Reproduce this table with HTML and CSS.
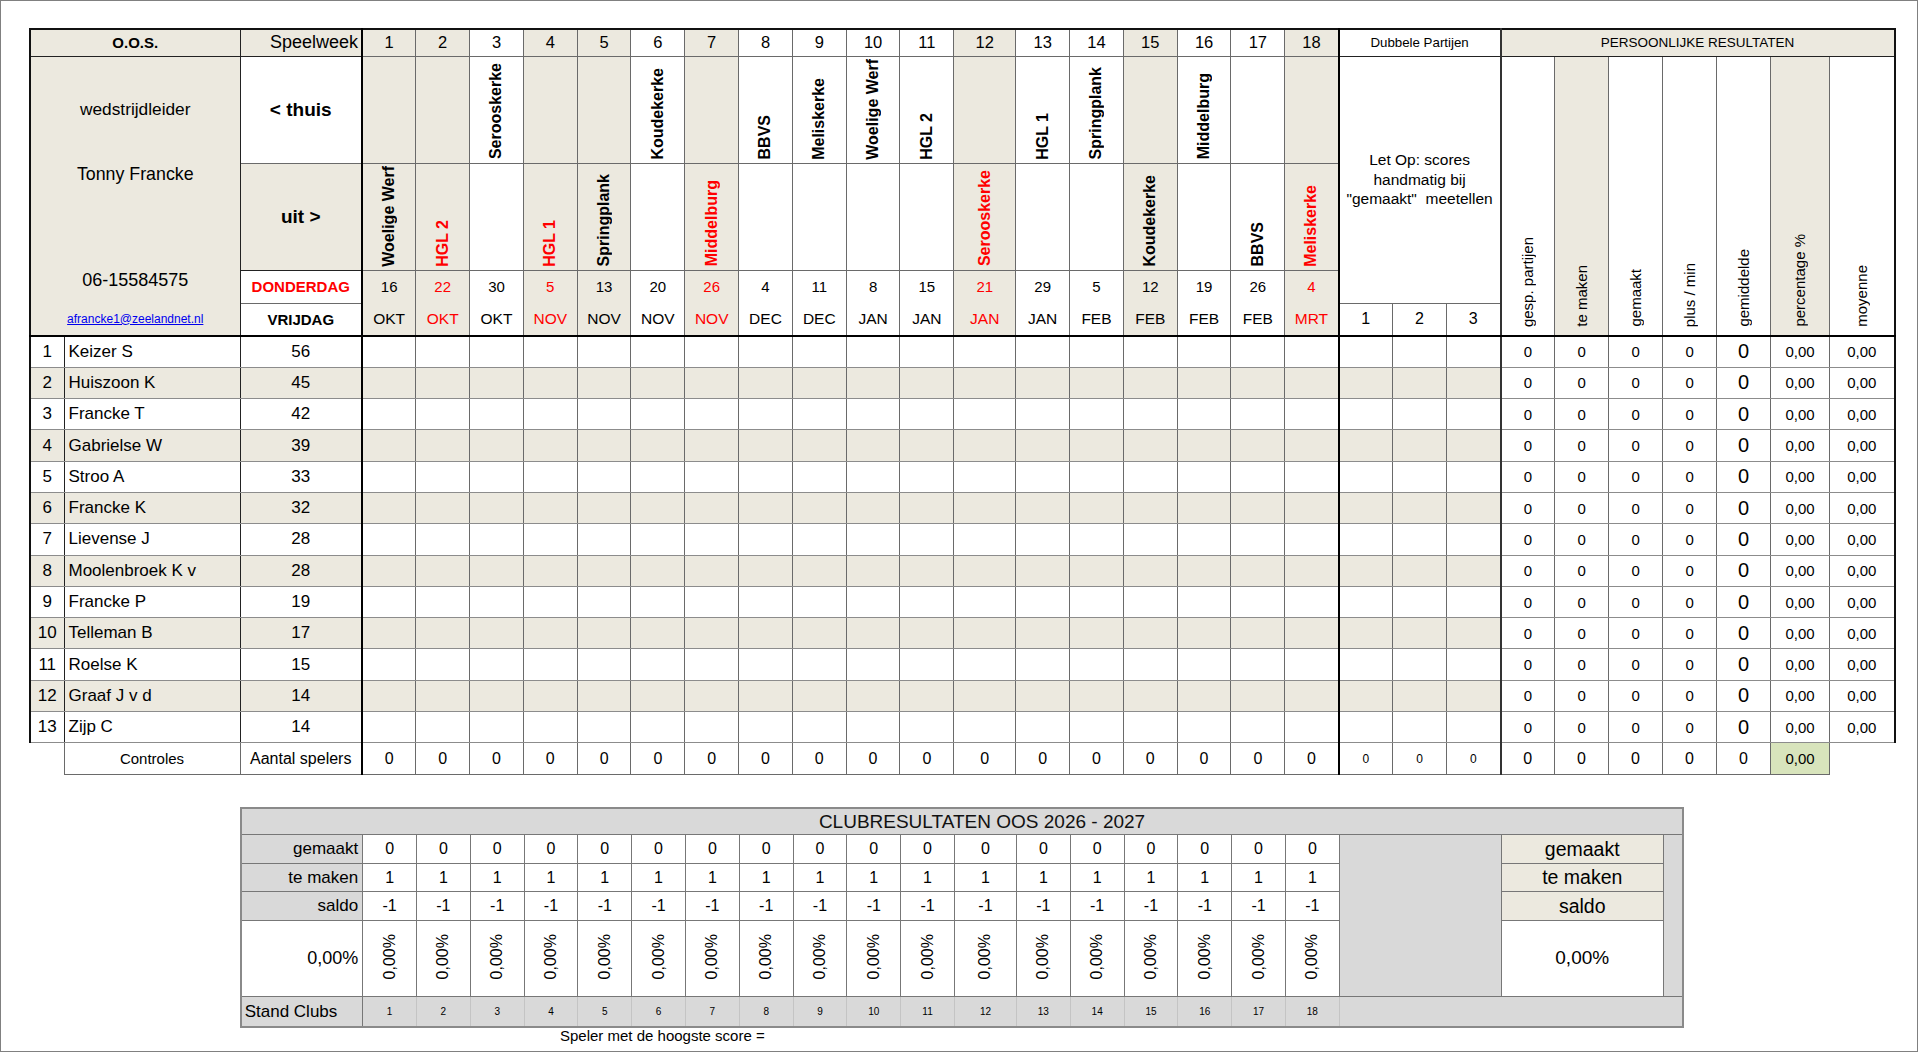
FILE: index.html
```html
<!DOCTYPE html>
<html lang="nl">
<head>
<meta charset="utf-8">
<title>O.O.S. Speelschema</title>
<link rel="stylesheet" href="styles.css">
</head>
<body>
<div class="page">
<table class="main">
<colgroup>
<col class="c-num"><col class="c-name"><col class="c-sw">
<col class="c-wk"><col class="c-wk"><col class="c-wk"><col class="c-wk"><col class="c-wk"><col class="c-wk"><col class="c-wk"><col class="c-wk"><col class="c-wk"><col class="c-wk"><col class="c-wk">
<col class="c-wk12">
<col class="c-wk"><col class="c-wk"><col class="c-wk"><col class="c-wk"><col class="c-wk"><col class="c-wk">
<col class="c-db"><col class="c-db"><col class="c-db">
<col class="c-pr"><col class="c-pr"><col class="c-pr"><col class="c-pr"><col class="c-pr"><col class="c-pct"><col class="c-moy">
</colgroup>
<tr class="r1">
<td colspan="2" class="b oos">O.O.S.</td>
<td class="b sw swh">Speelweek</td>
<td class="b wk">1</td><td class="b wk">2</td><td class="wk">3</td><td class="b wk">4</td><td class="b wk">5</td><td class="wk">6</td><td class="b wk">7</td><td class="wk">8</td><td class="wk">9</td><td class="wk">10</td><td class="wk">11</td><td class="b wk">12</td><td class="wk">13</td><td class="wk">14</td><td class="b wk">15</td><td class="wk">16</td><td class="wk">17</td><td class="b wk">18</td>
<td colspan="3" class="dl dbh">Dubbele Partijen</td>
<td colspan="7" class="b pl prh">PERSOONLIJKE RESULTATEN</td>
</tr>
<tr class="r2">
<td colspan="2" rowspan="4" class="b info"><div class="info-in"><div class="wl">wedstrijdleider</div><div class="tf">Tonny Francke</div><div class="ph">06-15584575</div><a class="mail" href="#">afrancke1@zeelandnet.nl</a></div></td>
<td class="sw thuis">&lt; thuis</td>
<td class="b tv"></td><td class="b tv"></td><td class="tv"><span class="v">Serooskerke</span></td><td class="b tv"></td><td class="b tv"></td><td class="tv"><span class="v">Koudekerke</span></td><td class="b tv"></td><td class="tv"><span class="v">BBVS</span></td><td class="tv"><span class="v">Meliskerke</span></td><td class="tv"><span class="v">Woelige Werf</span></td><td class="tv"><span class="v">HGL 2</span></td><td class="b tv"></td><td class="tv"><span class="v">HGL 1</span></td><td class="tv"><span class="v">Springplank</span></td><td class="b tv"></td><td class="tv"><span class="v">Middelburg</span></td><td class="tv"></td><td class="b tv"></td>
<td colspan="3" rowspan="3" class="dl letop">Let Op: scores<br>handmatig bij<br>"gemaakt"&nbsp; meetellen</td>
<td rowspan="4" class="pl pv"><span class="vr">gesp. partijen</span></td>
<td rowspan="4" class="b pv"><span class="vr">te maken</span></td>
<td rowspan="4" class="pv"><span class="vr">gemaakt</span></td>
<td rowspan="4" class="pv"><span class="vr">plus / min</span></td>
<td rowspan="4" class="pv"><span class="vr">gemiddelde</span></td>
<td rowspan="4" class="b pv"><span class="vr">percentage %</span></td>
<td rowspan="4" class="pv"><span class="vr">moyenne</span></td>
</tr>
<tr class="r3">
<td class="b sw uit">uit &gt;</td>
<td class="b tv"><span class="v">Woelige Werf</span></td><td class="b tv"><span class="v red">HGL 2</span></td><td class="tv"></td><td class="b tv"><span class="v red">HGL 1</span></td><td class="b tv"><span class="v">Springplank</span></td><td class="tv"></td><td class="b tv"><span class="v red">Middelburg</span></td><td class="tv"></td><td class="tv"></td><td class="tv"></td><td class="tv"></td><td class="b tv"><span class="v red">Serooskerke</span></td><td class="tv"></td><td class="tv"></td><td class="b tv"><span class="v">Koudekerke</span></td><td class="tv"></td><td class="tv"><span class="v">BBVS</span></td><td class="b tv"><span class="v red">Meliskerke</span></td>
</tr>
<tr class="r4">
<td class="sw dag red">DONDERDAG</td>
<td class="b dt">16</td><td class="b dt red">22</td><td class="dt">30</td><td class="b dt red">5</td><td class="b dt">13</td><td class="dt">20</td><td class="b dt red">26</td><td class="dt">4</td><td class="dt">11</td><td class="dt">8</td><td class="dt">15</td><td class="b dt red">21</td><td class="dt">29</td><td class="dt">5</td><td class="b dt">12</td><td class="dt">19</td><td class="dt">26</td><td class="b dt red">4</td>
</tr>
<tr class="r5">
<td class="sw dag">VRIJDAG</td>
<td class="b mo">OKT</td><td class="b mo red">OKT</td><td class="mo">OKT</td><td class="b mo red">NOV</td><td class="b mo">NOV</td><td class="mo">NOV</td><td class="b mo red">NOV</td><td class="mo">DEC</td><td class="mo">DEC</td><td class="mo">JAN</td><td class="mo">JAN</td><td class="b mo red">JAN</td><td class="mo">JAN</td><td class="mo">FEB</td><td class="b mo">FEB</td><td class="mo">FEB</td><td class="mo">FEB</td><td class="b mo red">MRT</td>
<td class="dl dn">1</td><td class="dn">2</td><td class="dn">3</td>
</tr>
<tr class="d"><td>1</td><td class="nm">Keizer S</td><td class="sc">56</td><td></td><td></td><td></td><td></td><td></td><td></td><td></td><td></td><td></td><td></td><td></td><td></td><td></td><td></td><td></td><td></td><td></td><td></td><td></td><td></td><td></td><td>0</td><td>0</td><td>0</td><td>0</td><td class="big">0</td><td>0,00</td><td>0,00</td></tr>
<tr class="d alt"><td>2</td><td class="nm">Huiszoon K</td><td class="sc">45</td><td></td><td></td><td></td><td></td><td></td><td></td><td></td><td></td><td></td><td></td><td></td><td></td><td></td><td></td><td></td><td></td><td></td><td></td><td></td><td></td><td></td><td>0</td><td>0</td><td>0</td><td>0</td><td class="big">0</td><td>0,00</td><td>0,00</td></tr>
<tr class="d"><td>3</td><td class="nm">Francke T</td><td class="sc">42</td><td></td><td></td><td></td><td></td><td></td><td></td><td></td><td></td><td></td><td></td><td></td><td></td><td></td><td></td><td></td><td></td><td></td><td></td><td></td><td></td><td></td><td>0</td><td>0</td><td>0</td><td>0</td><td class="big">0</td><td>0,00</td><td>0,00</td></tr>
<tr class="d alt"><td>4</td><td class="nm">Gabrielse W</td><td class="sc">39</td><td></td><td></td><td></td><td></td><td></td><td></td><td></td><td></td><td></td><td></td><td></td><td></td><td></td><td></td><td></td><td></td><td></td><td></td><td></td><td></td><td></td><td>0</td><td>0</td><td>0</td><td>0</td><td class="big">0</td><td>0,00</td><td>0,00</td></tr>
<tr class="d"><td>5</td><td class="nm">Stroo A</td><td class="sc">33</td><td></td><td></td><td></td><td></td><td></td><td></td><td></td><td></td><td></td><td></td><td></td><td></td><td></td><td></td><td></td><td></td><td></td><td></td><td></td><td></td><td></td><td>0</td><td>0</td><td>0</td><td>0</td><td class="big">0</td><td>0,00</td><td>0,00</td></tr>
<tr class="d alt"><td>6</td><td class="nm">Francke K</td><td class="sc">32</td><td></td><td></td><td></td><td></td><td></td><td></td><td></td><td></td><td></td><td></td><td></td><td></td><td></td><td></td><td></td><td></td><td></td><td></td><td></td><td></td><td></td><td>0</td><td>0</td><td>0</td><td>0</td><td class="big">0</td><td>0,00</td><td>0,00</td></tr>
<tr class="d"><td>7</td><td class="nm">Lievense J</td><td class="sc">28</td><td></td><td></td><td></td><td></td><td></td><td></td><td></td><td></td><td></td><td></td><td></td><td></td><td></td><td></td><td></td><td></td><td></td><td></td><td></td><td></td><td></td><td>0</td><td>0</td><td>0</td><td>0</td><td class="big">0</td><td>0,00</td><td>0,00</td></tr>
<tr class="d alt"><td>8</td><td class="nm">Moolenbroek K v</td><td class="sc">28</td><td></td><td></td><td></td><td></td><td></td><td></td><td></td><td></td><td></td><td></td><td></td><td></td><td></td><td></td><td></td><td></td><td></td><td></td><td></td><td></td><td></td><td>0</td><td>0</td><td>0</td><td>0</td><td class="big">0</td><td>0,00</td><td>0,00</td></tr>
<tr class="d"><td>9</td><td class="nm">Francke P</td><td class="sc">19</td><td></td><td></td><td></td><td></td><td></td><td></td><td></td><td></td><td></td><td></td><td></td><td></td><td></td><td></td><td></td><td></td><td></td><td></td><td></td><td></td><td></td><td>0</td><td>0</td><td>0</td><td>0</td><td class="big">0</td><td>0,00</td><td>0,00</td></tr>
<tr class="d alt"><td>10</td><td class="nm">Telleman B</td><td class="sc">17</td><td></td><td></td><td></td><td></td><td></td><td></td><td></td><td></td><td></td><td></td><td></td><td></td><td></td><td></td><td></td><td></td><td></td><td></td><td></td><td></td><td></td><td>0</td><td>0</td><td>0</td><td>0</td><td class="big">0</td><td>0,00</td><td>0,00</td></tr>
<tr class="d"><td>11</td><td class="nm">Roelse K</td><td class="sc">15</td><td></td><td></td><td></td><td></td><td></td><td></td><td></td><td></td><td></td><td></td><td></td><td></td><td></td><td></td><td></td><td></td><td></td><td></td><td></td><td></td><td></td><td>0</td><td>0</td><td>0</td><td>0</td><td class="big">0</td><td>0,00</td><td>0,00</td></tr>
<tr class="d alt"><td>12</td><td class="nm">Graaf J v d</td><td class="sc">14</td><td></td><td></td><td></td><td></td><td></td><td></td><td></td><td></td><td></td><td></td><td></td><td></td><td></td><td></td><td></td><td></td><td></td><td></td><td></td><td></td><td></td><td>0</td><td>0</td><td>0</td><td>0</td><td class="big">0</td><td>0,00</td><td>0,00</td></tr>
<tr class="d"><td>13</td><td class="nm">Zijp C</td><td class="sc">14</td><td></td><td></td><td></td><td></td><td></td><td></td><td></td><td></td><td></td><td></td><td></td><td></td><td></td><td></td><td></td><td></td><td></td><td></td><td></td><td></td><td></td><td>0</td><td>0</td><td>0</td><td>0</td><td class="big">0</td><td>0,00</td><td>0,00</td></tr>
<tr class="ctl"><td class="nob"></td><td class="ctlL">Controles</td><td class="sw">Aantal spelers</td><td>0</td><td>0</td><td>0</td><td>0</td><td>0</td><td>0</td><td>0</td><td>0</td><td>0</td><td>0</td><td>0</td><td>0</td><td>0</td><td>0</td><td>0</td><td>0</td><td>0</td><td>0</td><td class="dl sm">0</td><td class="sm">0</td><td class="sm">0</td><td class="pl">0</td><td>0</td><td>0</td><td>0</td><td>0</td><td class="green">0,00</td><td class="nob2"></td></tr>
</table>

<table class="club">
<colgroup>
<col class="k-lbl">
<col class="c-wk"><col class="c-wk"><col class="c-wk"><col class="c-wk"><col class="c-wk"><col class="c-wk"><col class="c-wk"><col class="c-wk"><col class="c-wk"><col class="c-wk"><col class="c-wk">
<col class="c-wk12">
<col class="c-wk"><col class="c-wk"><col class="c-wk"><col class="c-wk"><col class="c-wk"><col class="c-wk">
<col class="k-db"><col class="k-rl"><col class="k-st">
</colgroup>
<tr class="k-t"><td colspan="22" class="ctitle">CLUBRESULTATEN OOS 2026 - 2027</td></tr>
<tr class="k-r"><td class="cl">gemaakt</td><td>0</td><td>0</td><td>0</td><td>0</td><td>0</td><td>0</td><td>0</td><td>0</td><td>0</td><td>0</td><td>0</td><td>0</td><td>0</td><td>0</td><td>0</td><td>0</td><td>0</td><td>0</td><td rowspan="4" class="gray"></td><td class="rl">gemaakt</td><td rowspan="4" class="gray"></td></tr>
<tr class="k-r"><td class="cl">te maken</td><td>1</td><td>1</td><td>1</td><td>1</td><td>1</td><td>1</td><td>1</td><td>1</td><td>1</td><td>1</td><td>1</td><td>1</td><td>1</td><td>1</td><td>1</td><td>1</td><td>1</td><td>1</td><td class="rl">te maken</td></tr>
<tr class="k-r"><td class="cl">saldo</td><td>-1</td><td>-1</td><td>-1</td><td>-1</td><td>-1</td><td>-1</td><td>-1</td><td>-1</td><td>-1</td><td>-1</td><td>-1</td><td>-1</td><td>-1</td><td>-1</td><td>-1</td><td>-1</td><td>-1</td><td>-1</td><td class="rl">saldo</td></tr>
<tr class="k-p"><td class="pctl">0,00%</td><td><span class="vp">0,00%</span></td><td><span class="vp">0,00%</span></td><td><span class="vp">0,00%</span></td><td><span class="vp">0,00%</span></td><td><span class="vp">0,00%</span></td><td><span class="vp">0,00%</span></td><td><span class="vp">0,00%</span></td><td><span class="vp">0,00%</span></td><td><span class="vp">0,00%</span></td><td><span class="vp">0,00%</span></td><td><span class="vp">0,00%</span></td><td><span class="vp">0,00%</span></td><td><span class="vp">0,00%</span></td><td><span class="vp">0,00%</span></td><td><span class="vp">0,00%</span></td><td><span class="vp">0,00%</span></td><td><span class="vp">0,00%</span></td><td><span class="vp">0,00%</span></td><td class="rp">0,00%</td></tr>
<tr class="k-s"><td class="sl">Stand Clubs</td><td>1</td><td>2</td><td>3</td><td>4</td><td>5</td><td>6</td><td>7</td><td>8</td><td>9</td><td>10</td><td>11</td><td>12</td><td>13</td><td>14</td><td>15</td><td>16</td><td>17</td><td>18</td><td colspan="3"></td></tr>
</table>
<div class="best">Speler met de hoogste score =</div>
</div>
</body>
</html>
```
FILE: styles.css
```css
* { box-sizing: border-box; }
html, body { margin: 0; padding: 0; background: #fff; }
body { font-family: "Liberation Sans", Arial, sans-serif; color: #000; }

.page {
  width: 1918px;
  height: 1052px;
  border: 1px solid #808080;
  padding: 26.5px 0 0 28px;
  overflow: hidden;
}

table { border-collapse: collapse; table-layout: fixed; }
td {
  padding: 0;
  border: 1px solid #6a6a6a;
  text-align: center;
  vertical-align: middle;
  white-space: nowrap;
  overflow: hidden;
}

.main { width: 1864.6px; border: 2px solid #111; border-bottom: 1px solid #6a6a6a; }

col.c-num { width: 34px; }
col.c-name { width: 176px; }
col.c-sw { width: 122px; }
col.c-wk { width: 53.8px; }
col.c-wk12 { width: 62px; }
col.c-db { width: 54px; }
col.c-pr { width: 54px; }
col.c-pct { width: 59px; }
col.c-moy { width: 65px; }

.b { background: #ECE9DF; }
.red { color: #f00; }

.sw { border-right: 2px solid #000; }
.dl { border-left: 2px solid #000; }
.pl { border-left: 2px solid #333; }

/* header rows */
.r1 { height: 27.5px; }
.r1 td { border-bottom: 1px solid #222; }
.r1 td.wk { border-bottom: 1px solid #6a6a6a; font-size: 16.5px; }
.oos { font-weight: bold; font-size: 15px; border-right: 1px solid #222; }
.swh { text-align: right; padding-right: 3px; font-size: 18px; }
.dbh { font-size: 13.3px; background: #fff; }
.prh { font-size: 13.5px; }

.r2, .r3 { height: 107px; }
.r4, .r5 { height: 33px; }

.info { vertical-align: top; border-right: 1px solid #222; border-bottom: 2px solid #000; }
.info-in { display: flex; flex-direction: column; align-items: center; padding-top: 42px; }
.wl { font-size: 17.3px; line-height: 20px; }
.tf { font-size: 17.8px; line-height: 20px; margin-top: 45px; }
.ph { font-size: 18px; line-height: 22px; margin-top: 85px; }
.mail { font-size: 12px; line-height: 16px; margin-top: 20px; color: #0000ee; text-decoration: underline; }

.thuis, .uit { font-weight: bold; font-size: 19px; }
.uit { border-bottom: 1px solid #222; }
.dag { font-weight: bold; font-size: 15px; background: #fff; }

.tv { vertical-align: bottom; padding-bottom: 3px; line-height: 0; }
.v {
  display: inline-block;
  writing-mode: vertical-rl;
  transform: rotate(180deg);
  font-weight: bold;
  font-size: 16px;
  line-height: 18px;
  white-space: nowrap;
  vertical-align: bottom;
}

.dt { font-size: 15px; border-bottom-style: hidden; }
.mo { font-size: 15.5px; border-top-style: hidden; }
.r5 td { border-bottom: 2px solid #000; }
.dn { font-size: 16px; }

.letop { font-size: 15.5px; line-height: 19.6px; white-space: normal; background: #fff; }

.pv { vertical-align: bottom; padding-bottom: 8px; line-height: 0; border-bottom: 2px solid #000; }
.vr {
  display: inline-block;
  writing-mode: vertical-rl;
  transform: rotate(180deg);
  font-size: 15px;
  line-height: 18px;
  white-space: nowrap;
  vertical-align: bottom;
}

/* data rows */
.d { height: 31.3px; }
.d td { font-size: 17px; border-bottom: 1px solid #8c8c8c; }
.d td:nth-child(1) { border-right: 1px solid #222; }
.d td.nm { text-align: left; padding-left: 4px; border-right: 1px solid #222; }
.d td.sc { border-right: 2px solid #000; }
.d td:nth-child(22) { border-left: 2px solid #000; }
.d td:nth-child(25) { border-left: 2px solid #333; }
.d td:nth-child(n+25) { font-size: 15px; }
.d td.big { font-size: 20px; }
.alt td:nth-child(-n+24) { background: #ECE9DF; }

/* controls row */
.ctl { height: 32px; }
.ctl td { font-size: 16px; }
.ctl .ctlL { font-size: 15px; }
.ctl .sm { font-size: 12px; }
.ctl .green { background: #D8E4BC; font-size: 15px; }
.nob { border-left-style: hidden; border-bottom-style: hidden; }
.nob2 { border-right-style: hidden; border-bottom-style: hidden; }

/* club results */
.club {
  width: 1442.6px;
  margin-left: 210.7px;
  margin-top: 31.5px;
  border: 2px solid #8a8a8a;
}
.club td { border: 1px solid #777; font-size: 16px; }
col.k-lbl { width: 122px; }
col.k-db { width: 162px; }
col.k-rl { width: 162px; }
col.k-st { width: 20px; }

.k-t { height: 27px; }
.club .ctitle { background: #D9D9D9; font-size: 19px; color: #111; padding-left: 40px; }
.k-r { height: 28.5px; }
.club .cl { background: #D9D9D9; text-align: right; padding-right: 4px; font-size: 17px; }
.club .gray { background: #D9D9D9; }
.club .rl { background: #ECE9DF; font-size: 19.5px; }
.k-p { height: 76px; }
.club .pctl { text-align: right; padding-right: 4px; font-size: 18px; }
.vp {
  display: inline-block;
  writing-mode: vertical-rl;
  transform: rotate(180deg);
  font-size: 16px;
  line-height: 18px;
}
.club .rp { font-size: 19px; }
.k-s { height: 31px; }
.club .k-s td { background: #D9D9D9; font-size: 10px; border-color: #c4c4c4; }
.club .k-s td.sl { text-align: left; padding-left: 3px; font-size: 17px; border-right-color: #777; }

.best { margin-left: 531px; margin-top: 0; font-size: 15px; line-height: 16px; }
```
